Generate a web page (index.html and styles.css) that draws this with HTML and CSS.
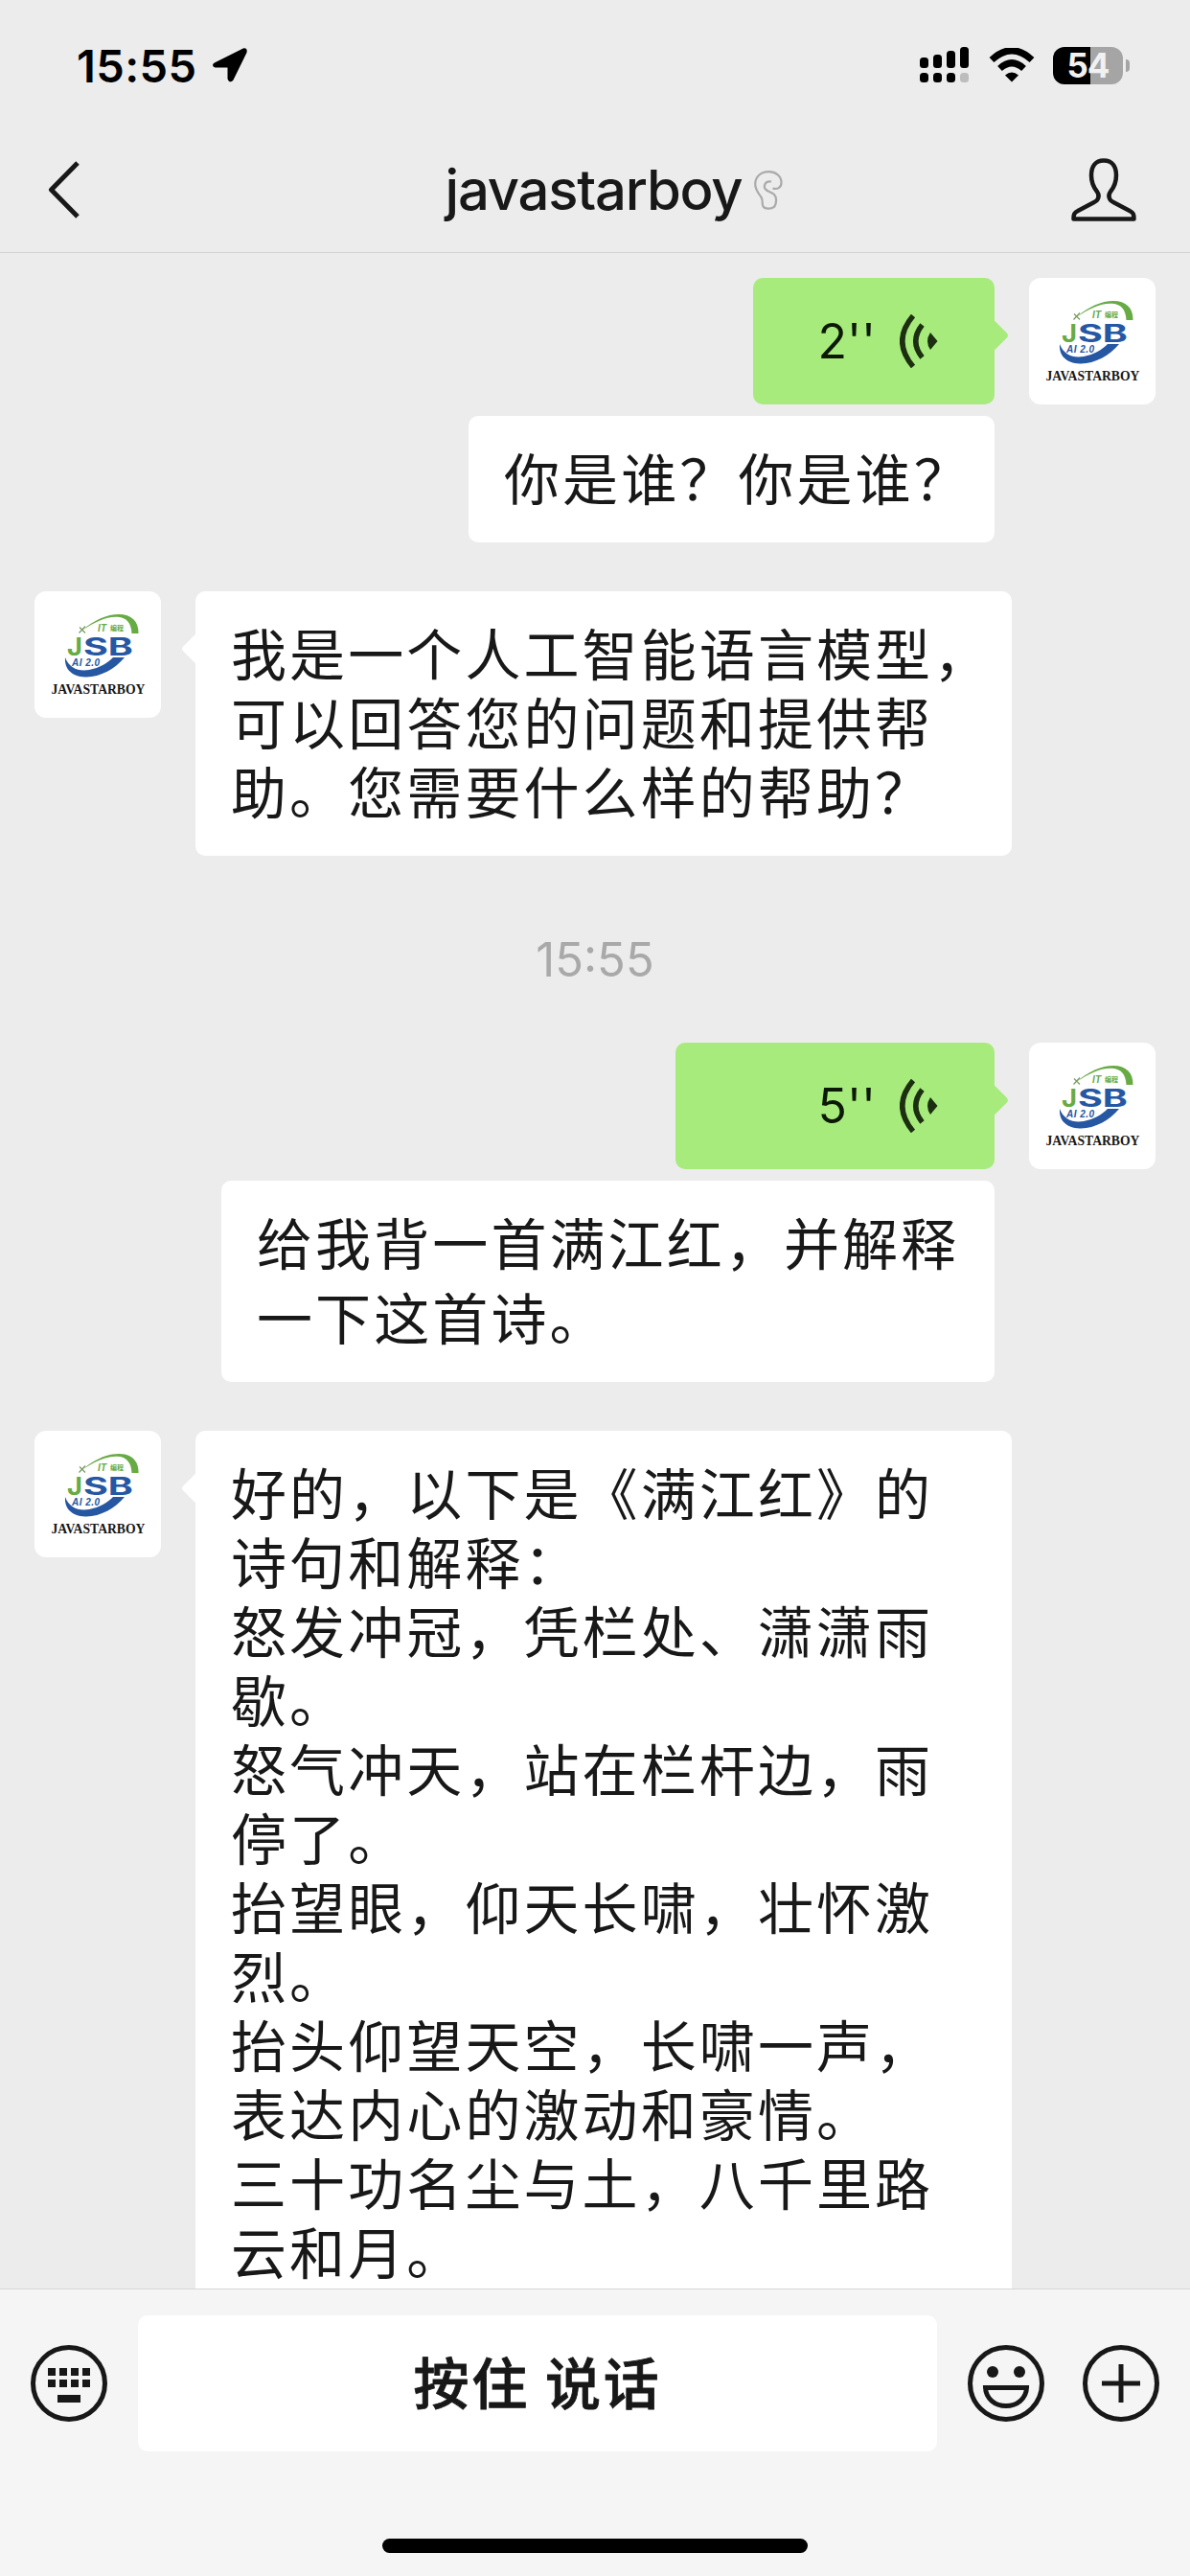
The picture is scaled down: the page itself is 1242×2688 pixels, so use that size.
FILE: index.html
```html
<!DOCTYPE html>
<html lang="zh-CN">
<head>
<meta charset="utf-8">
<title>javastarboy</title>
<link rel="stylesheet" href="styles.css">
</head>
<body>
<svg class="defs" aria-hidden="true">
  <symbol id="logo" viewBox="0 0 132 132">
    <path d="M50 40.500C62 30 76 24 88 24C101 24 109 31 108.500 44H101.500C101 33 96 27.500 87 26.800C75 26 63 32 50 40.500Z" fill="#67ab45"/>
    <path d="M47 37.500L53 43.500M46.500 43.500L53 36.500" stroke="#789b62" stroke-width="1.200"/>
    <text x="66" y="41.500" class="logo-small" fill="#67ab45" textLength="9">IT</text>
    <text x="79" y="41" class="logo-cjk" fill="#67ab45" textLength="14">编程</text>
    <text x="34" y="66.500" class="logo-big" fill="#67ab45" textLength="16" lengthAdjust="spacingAndGlyphs">J</text>
    <text x="51" y="66.500" class="logo-big" fill="#2657a3" textLength="52" lengthAdjust="spacingAndGlyphs">SB</text>
    <text x="39" y="78" class="logo-ai" fill="#2657a3" textLength="29">AI 2.0</text>
    <path d="M32 69C36 80 46 84 57 82C68 80 76 75 82 69H94C84 81 68 90 53 89.500C39 89 31 81 32 69Z" fill="#2657a3"/>
    <text x="17.500" y="106.500" class="logo-name" textLength="98" lengthAdjust="spacingAndGlyphs">JAVASTARBOY</text>
  </symbol>
  <symbol id="voice" viewBox="0 0 40 56">
    <path d="M14 1.500Q-8.500 28 14 54.500M23.500 11Q10 28 23.500 45" fill="none" stroke="#1c2f10" stroke-width="5.500"/>
    <path d="M32 19L39.500 28L32 37Q26 28 32 19Z" fill="#1c2f10"/>
  </symbol>
</svg>
<div class="phone">
  <header class="header">
    <div class="status">
      <span class="clock">15:55</span>
      <svg class="location" viewBox="0 0 38 38"><path d="M4 17.500L33 3Q36 2 35 5.500L21 34Q19 36 18 33V20H4Q1 19 4 17.500Z" fill="#000" stroke="#000" stroke-width="3" stroke-linejoin="round"/></svg>
      <svg class="signal" viewBox="0 0 51 38"><g fill="#000"><rect y="11" width="9" height="11" rx="3.500"/><rect x="14" y="8" width="9" height="14" rx="3.500"/><rect x="28" y="4" width="9" height="18" rx="3.500"/><rect x="42" width="9" height="22" rx="3.500"/><rect y="27" width="9" height="10" rx="3.500"/><rect x="14" y="27" width="9" height="10" rx="3.500"/><rect x="28" y="27" width="9" height="10" rx="3.500"/></g><rect x="42" y="27" width="9" height="10" rx="3.500" fill="#bdbdbd"/></svg>
      <svg class="wifi" viewBox="0 0 48 36"><path d="M3 12.500Q24-7 45 12.500M11.500 21.500Q24 10 36.500 21.500" fill="none" stroke="#000" stroke-width="7"/><path d="M17 28.500Q24 22.500 31 28.500L24 35.500Z"/></svg>
      <div class="battery"><span>54</span></div>
    </div>
    <nav class="nav">
      <svg class="back" viewBox="0 0 34 60"><path d="M31 2L3.500 30L31 58" fill="none" stroke="#181818" stroke-width="5" stroke-linejoin="round"/></svg>
      <div class="title"><h1>javastarboy</h1>
        <svg class="ear" viewBox="0 0 30 41"><path d="M19.500 18.500C24 20 28.500 18 28.500 12.500C28.500 5 22 1.200 15.500 1.200C7 1.200 1.200 6.500 1.200 14C1.200 20 4.500 23.500 7 27C10 31 8 33 9 36C10 41 21 41 22.500 35C24 29 23 25 18 23C12 21 9.500 18 11.500 14C12.800 11.500 15 11 18 11.500" fill="none" stroke="#aaa" stroke-width="2.200"/></svg>
      </div>
      <svg class="person" viewBox="0 0 68 66"><path d="M34 2.500C25 2.500 21 9 21 18C21 26 23 30 27 35C30 39 28.500 44 24 46L7 55C3 57 2.500 59 2.500 63.500H65.500C65.500 59 65 57 61 55L44 46C39.500 44 38 39 41 35C45 30 47 26 47 18C47 9 43 2.500 34 2.500Z" fill="none" stroke="#181818" stroke-width="4.500" stroke-linejoin="round"/></svg>
    </nav>
  </header>
  <main class="chat">
    <section class="row sent">
      <div class="stack">
        <div class="bubble voice"><span>2''</span><svg class="wave"><use href="#voice"/></svg></div>
        <div class="transcript question">你是谁？你是谁？</div>
      </div>
      <svg class="avatar"><use href="#logo"/></svg>
    </section>
    <section class="row">
      <svg class="avatar"><use href="#logo"/></svg>
      <div class="bubble reply">我是一个人工智能语言模型，<br>可以回答您的问题和提供帮<br>助。您需要什么样的帮助？</div>
    </section>
    <time class="stamp">15:55</time>
    <section class="row sent">
      <div class="stack">
        <div class="bubble voice long"><span>5''</span><svg class="wave"><use href="#voice"/></svg></div>
        <div class="transcript">给我背一首满江红，并解释<br>一下这首诗。</div>
      </div>
      <svg class="avatar"><use href="#logo"/></svg>
    </section>
    <section class="row">
      <svg class="avatar"><use href="#logo"/></svg>
      <div class="bubble reply">好的，以下是《满江红》的<br>诗句和解释：<br>怒发冲冠，凭栏处、潇潇雨<br>歇。<br>怒气冲天，站在栏杆边，雨<br>停了。<br>抬望眼，仰天长啸，壮怀激<br>烈。<br>抬头仰望天空，长啸一声，<br>表达内心的激动和豪情。<br>三十功名尘与土，八千里路<br>云和月。</div>
    </section>
  </main>
  <footer class="footer">
    <div class="tools">
      <svg class="tool" viewBox="0 0 80 80"><circle cx="40" cy="40" r="37.500" fill="none" stroke="#181818" stroke-width="5"/><path d="M18 24h8v8h-8zM30 24h8v8h-8zM42 24h8v8h-8zM54 24h8v8h-8zM18 36h8v8h-8zM30 36h8v8h-8zM42 36h8v8h-8zM54 36h8v8h-8zM28 52h24v8H28z" fill="#181818"/></svg>
      <button class="talk">按住 说话</button>
      <svg class="tool" viewBox="0 0 80 80"><circle cx="40" cy="40" r="37.500" fill="none" stroke="#181818" stroke-width="5"/><circle cx="26" cy="28" r="6" fill="#181818"/><circle cx="54" cy="28" r="6" fill="#181818"/><path d="M18.500 44.500H61.500C61 56 51.500 63.500 40 63.500S19 56 18.500 44.500Z" fill="none" stroke="#181818" stroke-width="5"/></svg>
      <svg class="tool plus" viewBox="0 0 80 80"><circle cx="40" cy="40" r="37.500" fill="none" stroke="#181818" stroke-width="5"/><path d="M40 20V60M20 40H60" stroke="#181818" stroke-width="5"/></svg>
    </div>
    <div class="home"></div>
  </footer>
</div>
</body>
</html>
```
FILE: styles.css
```css
* { box-sizing: border-box; }
body { margin: 0; color: #181818; font-family: Inter, "Noto Sans CJK SC", sans-serif; }
.defs { display: none; }
.phone { display: flex; flex-direction: column; width: 1242px; height: 2688px; overflow: hidden; background: #ececec; }
.header { flex: none; height: 264px; background: #ececec; border-bottom: 1px solid #d2d2d2; }
.status { display: flex; align-items: center; height: 136px; padding: 0 64px 0 80px; }
.clock { width: 141px; font-size: 47px; font-weight: 600; letter-spacing: 0.4px; color: #000; }
.location { width: 38px; height: 38px; }
.signal { width: 51px; height: 38px; margin-left: auto; }
.wifi { width: 48px; height: 36px; margin: 0 19px 0 21px; }
.battery { position: relative; display: flex; align-items: center; justify-content: center; width: 73px; height: 39px; margin-right: 6px; border-radius: 12px; background: linear-gradient(90deg, #000 0 39px, #a5a5a5 39px); color: #f1f1f1; font-size: 35px; font-weight: 700; letter-spacing: -1px; }
.battery::after { content: ""; position: absolute; right: -7px; top: 13px; width: 4px; height: 13px; border-radius: 0 4px 4px 0; background: #a5a5a5; }
.nav { display: flex; align-items: center; justify-content: space-between; height: 124px; padding: 0 56px 0 50px; }
.back { width: 34px; height: 60px; }
.title { display: flex; align-items: center; gap: 12px; padding-left: 79px; }
.title h1 { margin: 0; font-size: 58px; line-height: 76px; font-weight: 500; letter-spacing: -1.2px; }
.ear { width: 30px; height: 41px; }
.person { width: 68px; height: 66px; }
.chat { flex: 1; min-height: 0; overflow: hidden; padding: 26px 36px 0; }
.row { display: flex; align-items: flex-start; gap: 36px; margin-bottom: 51px; }
.sent { justify-content: flex-end; }
.stack { display: flex; flex-direction: column; align-items: flex-end; gap: 12px; }
.avatar { flex: none; width: 132px; height: 132px; border-radius: 12px; background: #fff; }
.bubble { position: relative; border-radius: 10px; }
.bubble::before { content: ""; position: absolute; top: 47px; width: 26px; height: 26px; border-radius: 4px; background: inherit; transform: rotate(45deg); }
.voice { display: flex; align-items: center; justify-content: flex-end; gap: 25px; width: 252px; height: 132px; padding-right: 59px; background: #a8eb7d; color: #0c1a05; font-size: 50px; }
.voice::before { right: -10px; }
.long { width: 333px; }
.wave { width: 40px; height: 56px; }
.transcript, .reply { font-family: "Noto Sans CJK SC", sans-serif; font-size: 58px; letter-spacing: 3.1px; white-space: nowrap; background: #fff; }
.transcript { width: 807px; padding: 24px 37px 30px; border-radius: 10px; line-height: 78px; }
.question { width: 549px; padding-right: 0; }
.reply { width: 852px; padding: 27px 37px 33px; line-height: 72px; }
.reply::before { left: -10px; }
.stamp { display: block; height: 144px; line-height: 116px; text-align: center; font-size: 49px; color: #a9a9a9; }
.footer { flex: none; height: 300px; border-top: 1px solid #d6d6d6; background: #f5f5f5; }
.tools { display: flex; align-items: center; height: 142px; margin-top: 27px; padding: 0 32px; }
.tool { flex: none; width: 80px; height: 80px; }
.plus { margin-left: 40px; }
.talk { flex: 1; height: 142px; margin: 0 32px; padding: 0 0 6px; border: 0; border-radius: 10px; background: #fff; color: #181818; font: 500 58px "Noto Sans CJK SC", sans-serif; letter-spacing: 2.8px; -webkit-text-stroke: 0.8px #181818; }
.home { width: 444px; height: 15px; margin: 91px auto 0; border-radius: 8px; background: #000; }
.logo-small { font: italic 700 10px "Liberation Sans", sans-serif; }
.logo-cjk { font: 700 7px "Noto Sans CJK SC", sans-serif; }
.logo-big { font: 700 25px Inter, sans-serif; }
.logo-ai { font: italic 700 10px "Liberation Sans", sans-serif; }
.logo-name { font: 700 15px "Liberation Serif", serif; fill: #171717; }
```
